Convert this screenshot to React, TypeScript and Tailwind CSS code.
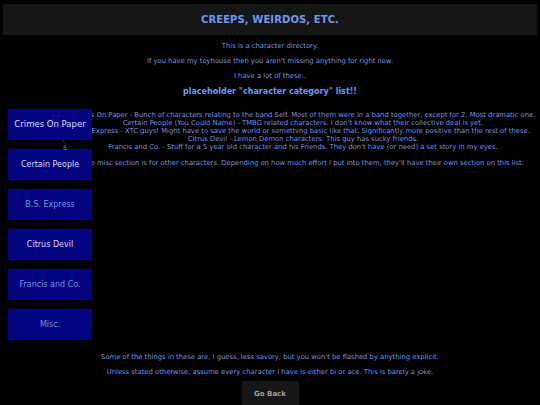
const categories = [
  { name: 'Crimes On Paper', bright: true, big: true },
  { name: 'Certain People', bright: true },
  { name: 'B.S. Express' },
  { name: 'Citrus Devil', bright: true },
  { name: 'Francis and Co.' },
  { name: 'Misc.' },
];

const list = [
  'Crimes On Paper - Bunch of characters relating to the band Self. Most of them were in a band together, except for 2. Most dramatic one.',
  "Certain People (You Could Name) - TMBG related characters. I don't know what their collective deal is yet.",
  'B.S. Express - XTC guys! Might have to save the world or something basic like that. Significantly more positive than the rest of these.',
  'Citrus Devil - Lemon Demon characters. This guy has sucky friends.',
  "Francis and Co. - Stuff for a 5 year old character and his Friends. They don't have (or need) a set story in my eyes.",
];

export default function App() {
  return (
    <div className="relative w-[540px] h-[405px] overflow-hidden bg-black text-[#7595e2] font-['DejaVu_Sans',Verdana,sans-serif]">
      <header className="mx-[3px] mt-[4px] h-[31px] bg-[#161616] flex items-center justify-center">
        <h1 className="text-[10px] font-bold text-[#7198ea] tracking-[0.1px]">CREEPS, WEIRDOS, ETC.</h1>
      </header>

      <div className="flex flex-col items-center text-[6.8px] leading-[8px]">
        <p className="mt-[7px]">This is a character directory.</p>
        <p className="mt-[7px]">If you have my toyhouse then you aren't missing anything for right now.</p>
        <p className="mt-[7px]">I have a lot of these..</p>
        <h2 className="mt-[7px] text-[8px] leading-[10px] font-bold text-[#7198ea]">placeholder "character category" list!!</h2>
      </div>

      <div className="pl-[66px] mt-[14px] flex flex-col items-center text-[6.8px] leading-[8px] whitespace-nowrap">
        {list.map((line) => (
          <p key={line}>{line}</p>
        ))}
        <p className="mt-[8px]">
          The misc section is for other characters. Depending on how much effort I put into them, they'll have their own section on this list.
        </p>
      </div>

      <div className="mt-[186px] flex flex-col items-center text-[6.8px] leading-[8px]">
        <p>Some of the things in these are, I guess, less savory, but you won't be flashed by anything explicit.</p>
        <p className="mt-[7px]">Unless stated otherwise, assume every character I have is either bi or ace. This is barely a joke.</p>
        <button className="mt-[5px] w-[57px] h-[26px] bg-[#161616] text-[#a0a0a0] text-[7px] font-bold">Go Back</button>
      </div>

      {/* sidebar nav floats over the list */}
      <nav className="absolute left-[8px] top-[109px] flex flex-col gap-[9px]">
        {categories.map((c) => (
          <a
            key={c.name}
            className={`w-[84px] h-[31px] bg-[#04047e] flex items-center justify-center ${
              c.big ? 'text-[8.5px]' : 'text-[8px]'
            } ${c.bright ? 'text-[#dcdcf5]' : 'text-[#7595e2]'}`}
          >
            {c.name}
          </a>
        ))}
      </nav>
      <span className="absolute left-[63px] top-[140px] text-[5px] leading-[5px] text-[#7595e2]">'.</span>
      <span className="absolute left-[63px] top-[145px] text-[6px] leading-[6px] text-[#7595e2]">5</span>
    </div>
  );
}
